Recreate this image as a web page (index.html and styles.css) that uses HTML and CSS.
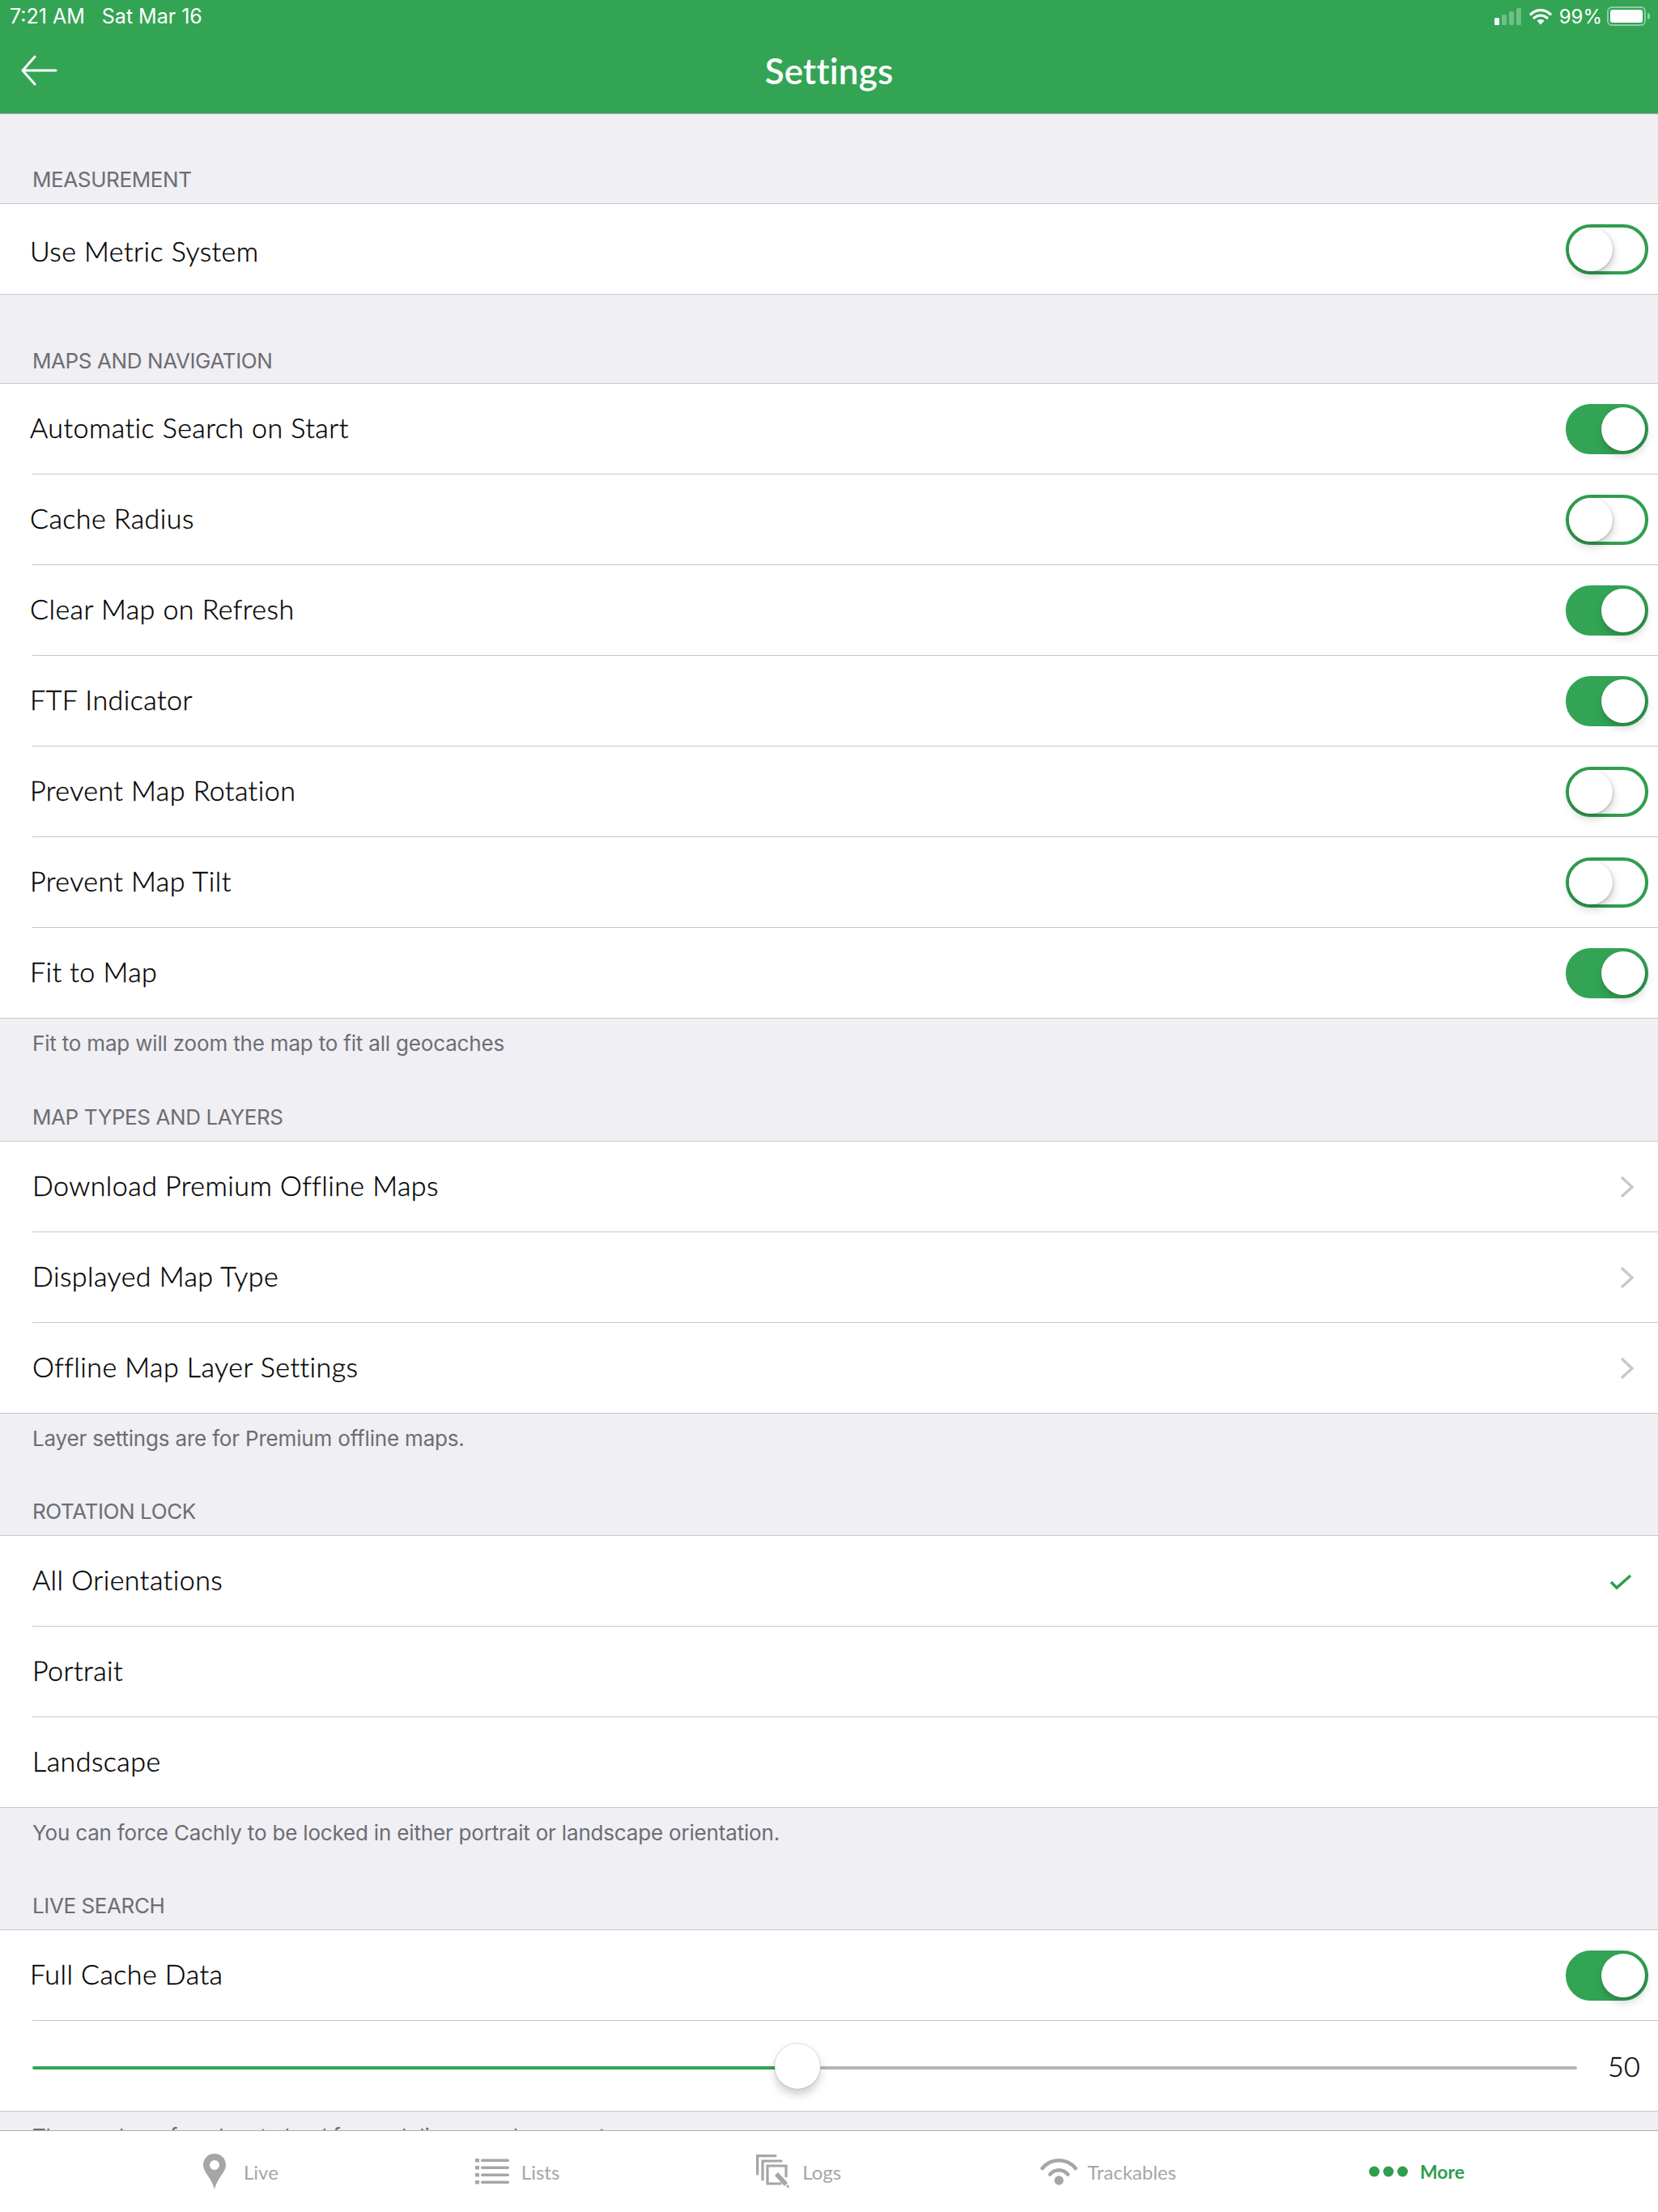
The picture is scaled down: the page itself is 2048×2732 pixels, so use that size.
FILE: index.html
```html
<!DOCTYPE html>
<html lang="en">
<head>
<meta charset="utf-8">
<title>Settings</title>
<link rel="stylesheet" href="styles.css">
</head>
<body>
<div class="app">
  <header class="nav">
    <div class="status">
      <div class="status-left"><span>7:21 AM</span><span>Sat Mar 16</span></div>
      <div class="status-right">
        <svg class="signal" width="33" height="21" viewBox="0 0 33 21"><rect x="0" y="12" width="6" height="9" rx="1.500" fill="#fff"/><rect x="9" y="8" width="6" height="13" rx="1.500" fill="#fff" opacity=".3"/><rect x="18" y="4" width="6" height="17" rx="1.500" fill="#fff" opacity=".3"/><rect x="27" y="0" width="6" height="21" rx="1.500" fill="#fff" opacity=".3"/></svg>
        <svg class="wifi" width="28" height="21" viewBox="0 0 28 21"><path d="M2 7.500C9 1 19 1 26 7.500M6 12C10.500 8 17.500 8 22 12" fill="none" stroke="#fff" stroke-width="3.200" stroke-linecap="round"/><path d="M9.500 15.500C12 13.500 16 13.500 18.500 15.500L14 20.500z" fill="#fff"/></svg>
        <span class="pct">99%</span>
        <div class="battery"><div class="battery-fill"></div></div>
        <div class="battery-tip"></div>
      </div>
    </div>
    <div class="nav-bar">
      <svg class="back" width="46" height="38" viewBox="0 0 46 38"><path d="M44 19H3M18 2 3 19l15 17" fill="none" stroke="#fff" stroke-width="3" stroke-linecap="round" stroke-linejoin="round"/></svg>
      <h1 class="title">Settings</h1>
    </div>
  </header>

  <main class="content">
    <h2 class="head head-first">MEASUREMENT</h2>
    <ul class="list">
      <li class="row row-toggle row-single"><span class="label">Use Metric System</span><span class="switch"></span></li>
    </ul>

    <h2 class="head head-gap">MAPS AND NAVIGATION</h2>
    <ul class="list">
      <li class="row row-toggle"><span class="label">Automatic Search on Start</span><span class="switch on"></span></li>
      <li class="row row-toggle"><span class="label">Cache Radius</span><span class="switch"></span></li>
      <li class="row row-toggle"><span class="label">Clear Map on Refresh</span><span class="switch on"></span></li>
      <li class="row row-toggle"><span class="label">FTF Indicator</span><span class="switch on"></span></li>
      <li class="row row-toggle"><span class="label">Prevent Map Rotation</span><span class="switch"></span></li>
      <li class="row row-toggle"><span class="label">Prevent Map Tilt</span><span class="switch"></span></li>
      <li class="row row-toggle"><span class="label">Fit to Map</span><span class="switch on"></span></li>
    </ul>
    <p class="foot">Fit to map will zoom the map to fit all geocaches</p>

    <h2 class="head head-tall">MAP TYPES AND LAYERS</h2>
    <ul class="list">
      <li class="row"><span class="label">Download Premium Offline Maps</span><svg class="chev" width="18" height="28" viewBox="0 0 18 28"><path d="M2 2l13 12L2 26" fill="none" stroke="#c7c7cc" stroke-width="3.400"/></svg></li>
      <li class="row"><span class="label">Displayed Map Type</span><svg class="chev" width="18" height="28" viewBox="0 0 18 28"><path d="M2 2l13 12L2 26" fill="none" stroke="#c7c7cc" stroke-width="3.400"/></svg></li>
      <li class="row"><span class="label">Offline Map Layer Settings</span><svg class="chev" width="18" height="28" viewBox="0 0 18 28"><path d="M2 2l13 12L2 26" fill="none" stroke="#c7c7cc" stroke-width="3.400"/></svg></li>
    </ul>
    <p class="foot">Layer settings are for Premium offline maps.</p>

    <h2 class="head">ROTATION LOCK</h2>
    <ul class="list">
      <li class="row"><span class="label">All Orientations</span><svg class="check" width="28" height="22" viewBox="0 0 28 22"><path d="M2 12l7 7L26 4" fill="none" stroke="#2f9e4f" stroke-width="3.600"/></svg></li>
      <li class="row"><span class="label">Portrait</span></li>
      <li class="row"><span class="label">Landscape</span></li>
    </ul>
    <p class="foot">You can force Cachly to be locked in either portrait or landscape orientation.</p>

    <h2 class="head">LIVE SEARCH</h2>
    <ul class="list">
      <li class="row row-toggle"><span class="label">Full Cache Data</span><span class="switch on"></span></li>
      <li class="row row-slider">
        <div class="slider">
          <div class="track-on"></div>
          <div class="knob"></div>
          <div class="track-off"></div>
        </div>
        <span class="value">50</span>
      </li>
    </ul>
    <p class="foot">The number of caches to load for each live search request.</p>
  </main>

  <nav class="tabs">
    <div class="tab tab-live">
      <svg width="28" height="44" viewBox="0 0 28 44"><path fill-rule="evenodd" d="M14 0C6 0 0 6 0 14c0 9 10 15 14 30 4-15 14-21 14-30C28 6 22 0 14 0zm0 8a6 6 0 1 1 0 12 6 6 0 0 1 0-12z" fill="#a6a6a6"/></svg>
      <span>Live</span>
    </div>
    <div class="tab">
      <svg width="42" height="32" viewBox="0 0 42 32"><g fill="#a6a6a6"><rect x="0" y="0" width="5" height="4.500"/><rect x="7" y="0.500" width="35" height="3.500" rx="1.700"/><rect x="0" y="9" width="5" height="4.500"/><rect x="7" y="9.500" width="35" height="3.500" rx="1.700"/><rect x="0" y="18" width="5" height="4.500"/><rect x="7" y="18.500" width="35" height="3.500" rx="1.700"/><rect x="0" y="27" width="5" height="4.500"/><rect x="7" y="27.500" width="35" height="3.500" rx="1.700"/></g></svg>
      <span>Lists</span>
    </div>
    <div class="tab">
      <svg width="42" height="42" viewBox="0 0 42 42"><g fill="none" stroke="#a6a6a6" stroke-width="3.200" stroke-linecap="round"><path d="M1.600 24V1.600H24"/><path d="M8 31V8h23"/><path d="M30 36H14V14h23v13"/></g><path d="M23 26l4-4 12 13-4 4zM37 39l2-2 2 3-1.500 1.500z" fill="#a6a6a6"/></svg>
      <span>Logs</span>
    </div>
    <div class="tab tab-track">
      <svg width="46" height="34" viewBox="0 0 46 34"><path d="M2.500 13C13 0 33 0 43.500 13M12 20.500C18 13.500 28 13.500 34 20.500" fill="none" stroke="#a6a6a6" stroke-width="4.600" stroke-linecap="round"/><circle cx="23" cy="28" r="5.700" fill="#a6a6a6"/></svg>
      <span>Trackables</span>
    </div>
    <div class="tab tab-active">
      <svg width="48" height="14" viewBox="0 0 48 14"><g fill="#2f9e4f"><circle cx="6.500" cy="7" r="6.500"/><circle cx="24" cy="7" r="6.500"/><circle cx="41.500" cy="7" r="6.500"/></g></svg>
      <span>More</span>
    </div>
  </nav>
</div>
</body>
</html>
```

FILE: styles.css
```css
* { box-sizing: border-box; }
html, body { margin: 0; padding: 0; }
body { width: 2048px; height: 2732px; overflow: hidden; background: #efeff4; font-family: "Lato", "Liberation Sans", sans-serif; }
.app { height: 2732px; display: flex; flex-direction: column; }

.nav { flex: none; height: 141px; background: #33a454; border-bottom: 1px solid #aeaeb2; color: #fff; display: flex; flex-direction: column; }
.status { height: 40px; padding: 0 10px 0 12px; display: flex; justify-content: space-between; align-items: center; font-family: "Inter", "Liberation Sans", sans-serif; font-size: 25px; }
.status-left { display: flex; gap: 21px; }
.status-right { display: flex; align-items: center; }
.signal { margin-right: 10px; }
.wifi { margin-right: 9px; }
.pct { margin-right: 6px; font-size: 24px; }
.battery { width: 48px; height: 24px; border: 2px solid rgba(255,255,255,.45); border-radius: 6px; padding: 2px; }
.battery-fill { width: 100%; height: 100%; background: #fff; border-radius: 3px; }
.battery-tip { width: 3px; height: 8px; margin-left: 2px; background: rgba(255,255,255,.45); border-radius: 0 3px 3px 0; }
.nav-bar { position: relative; flex: 1; display: flex; align-items: center; justify-content: center; }
.back { position: absolute; left: 25px; top: 28px; }
.title { margin: 0; font-size: 44px; font-weight: 600; letter-spacing: .2px; position: relative; top: -3px; }

.content { flex: 1; min-height: 0; overflow: hidden; }
.head { margin: 0; padding: 0 40px 14px; display: flex; align-items: flex-end; font-family: "Inter", "Liberation Sans", sans-serif; font-size: 26px; font-weight: 400; letter-spacing: -.4px; color: #6d6d72; }
.head-first { height: 110px; }
.head-gap { height: 109px; padding-bottom: 12px; }
.foot + .head { height: 90px; }
.foot + .head-tall { height: 91px; }
.foot { margin: 0; height: 60px; padding: 15px 40px 0; font-family: "Inter", "Liberation Sans", sans-serif; font-size: 26px; letter-spacing: -.18px; color: #6d6d72; line-height: 32px; overflow: hidden; }

.list { list-style: none; margin: 0; padding: 0; background: #fff; border-top: 1px solid #c8c7cc; border-bottom: 1px solid #c8c7cc; }
.row { height: 112px; padding: 0 29px 0 40px; display: flex; align-items: center; justify-content: space-between; position: relative; font-size: 34px; font-weight: 300; color: #000; -webkit-text-stroke: .35px #000; }
.row:last-child { height: 111px; }
.row + .row::before { content: ""; position: absolute; top: -1px; left: 40px; right: 0; height: 1px; background: #c8c7cc; }
.row-toggle { padding: 0 12px 0 37px; }
.label { letter-spacing: .45px; margin-top: -5px; }
.row-single .label { margin-top: 3px; }
.check { margin-right: 3px; }

.switch { width: 102px; height: 62px; border: 4px solid #2f9e4f; border-radius: 31px; background: #fff; display: block; position: relative; }
.switch::after { content: ""; position: absolute; left: 0; top: 0; width: 54px; height: 54px; border-radius: 50%; background: #fff; box-shadow: 1px 6px 12px rgba(0,0,0,.18), 1px 1px 3px rgba(0,0,0,.16); }
.switch.on { background: #33a454; border-color: #33a454; }
.switch.on::after { left: 40px; }

.row-slider { padding: 0 22px 0 40px; gap: 38px; }
.slider { flex: 1; display: flex; align-items: center; }
.track-on { width: 945px; height: 4px; margin: 4px -28px 0 0; background: #33a454; border-radius: 2px; }
.knob { flex: none; width: 56px; height: 56px; border-radius: 50%; background: #fff; position: relative; box-shadow: 0 7px 12px rgba(0,0,0,.2), 0 0 2px rgba(0,0,0,.3); }
.track-off { flex: 1; height: 4px; margin-top: 4px; background: #b5b5b5; border-radius: 2px; }
.value { font-size: 34px; letter-spacing: .3px; }

.tabs { flex: none; height: 101px; background: #fff; border-top: 1px solid #aeaeb2; display: flex; align-items: center; gap: 243px; padding-left: 251px; }
.tab { display: flex; align-items: center; gap: 15px; font-size: 24px; color: #a6a6a6; }
.tab-live { gap: 22px; }
.tab-track { gap: 12px; margin-left: 3px; }
.tab-active { margin-left: -5px; font-size: 23px; color: #2f9e4f; font-weight: 700; }
```
